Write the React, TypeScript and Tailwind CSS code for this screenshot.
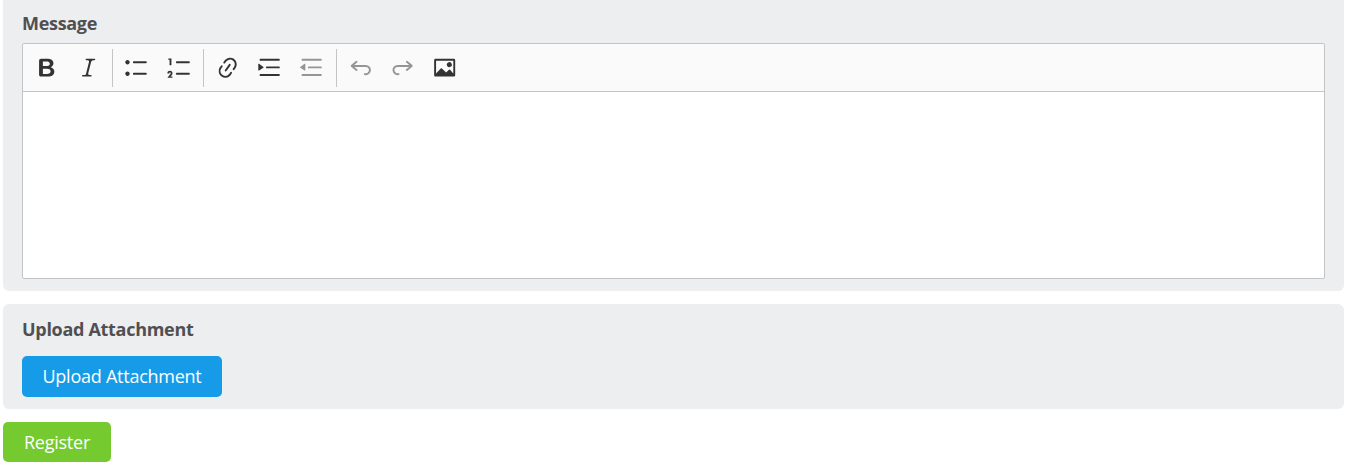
type Tool = {
  label: string;
  path: string;
  disabled?: boolean;
};

const LINES =
  'M2 3.75c0 .414.336.75.75.75h14.5a.75.75 0 1 0 0-1.5H2.75a.75.75 0 0 0-.75.75zm5 6c0 .414.336.75.75.75h9.5a.75.75 0 1 0 0-1.5h-9.5a.75.75 0 0 0-.75.75zM2.75 16.5h14.5a.75.75 0 1 0 0-1.5H2.75a.75.75 0 1 0 0 1.5z';

const toolGroups: Tool[][] = [
  [
    {
      label: 'Bold',
      path: 'M10.187 17H5.773c-.637 0-1.092-.138-1.364-.415-.273-.277-.409-.718-.409-1.323V4.738c0-.617.14-1.062.419-1.332.279-.27.73-.406 1.354-.406h4.68c.69 0 1.288.041 1.793.124.506.083.96.242 1.36.478.341.197.644.447.906.75a3.262 3.262 0 0 1 .808 2.162c0 1.401-.722 2.426-2.167 3.075C15.05 10.175 16 11.315 16 13.01a3.756 3.756 0 0 1-2.296 3.504 6.1 6.1 0 0 1-1.517.377c-.571.073-1.238.11-2 .11zm-.217-6.217H7v4.087h3.069c1.977 0 2.965-.69 2.965-2.072 0-.707-.256-1.22-.768-1.537-.512-.319-1.277-.478-2.296-.478zM7 5.13v3.619h2.606c.729 0 1.292-.067 1.69-.2a1.6 1.6 0 0 0 .91-.765c.165-.267.247-.566.247-.897 0-.707-.26-1.176-.778-1.409-.519-.232-1.31-.348-2.375-.348H7z',
    },
    {
      label: 'Italic',
      path: 'M9.586 14.633l.021.004c-.036.335.095.655.393.962.082.083.173.15.274.201h1.474a.6.6 0 1 1 0 1.2H5.304a.6.6 0 0 1 0-1.2h1.15c.474-.07.809-.182 1.005-.334.157-.122.291-.32.404-.597l2.416-9.55a1.053 1.053 0 0 0-.281-.823 1.12 1.12 0 0 0-.442-.296H8.15a.6.6 0 0 1 0-1.2h6.443a.6.6 0 1 1 0 1.2h-1.195c-.376.056-.65.155-.823.296-.215.175-.423.439-.623.79l-2.366 9.347z',
    },
  ],
  [
    {
      label: 'Bulleted List',
      path: 'M7 5.75c0 .414.336.75.75.75h9.5a.75.75 0 1 0 0-1.5h-9.5a.75.75 0 0 0-.75.75zm-6 0C1 4.784 1.777 4 2.75 4c.966 0 1.75.777 1.75 1.75 0 .966-.777 1.75-1.75 1.75C1.784 7.5 1 6.723 1 5.75zm6 9c0 .414.336.75.75.75h9.5a.75.75 0 1 0 0-1.5h-9.5a.75.75 0 0 0-.75.75zm-6 0c0-.966.777-1.75 1.75-1.75.966 0 1.75.777 1.75 1.75 0 .966-.777 1.75-1.75 1.75-.966 0-1.75-.777-1.75-1.75z',
    },
    {
      label: 'Numbered List',
      path: 'M7 5.75c0 .414.336.75.75.75h9.5a.75.75 0 1 0 0-1.5h-9.5a.75.75 0 0 0-.75.75zM3.5 3v5H2V3.7H1v-1h2.5V3zM.343 17.857l2.59-3.257H2.92a.6.6 0 1 0-1.04 0H.302a2 2 0 1 1 3.995 0h-.001c-.048.405-.16.734-.333.988-.175.254-.59.692-1.244 1.312H4.3v1h-4l.043-.043zM7 14.75a.75.75 0 0 1 .75-.75h9.5a.75.75 0 1 1 0 1.5h-9.5a.75.75 0 0 1-.75-.75z',
    },
  ],
  [
    {
      label: 'Link',
      path: 'm11.077 15 .991-1.416a.75.75 0 1 1 1.229.86l-1.148 1.64a.748.748 0 0 1-.217.206 5.251 5.251 0 0 1-8.503-5.955.741.741 0 0 1 .12-.274l1.147-1.639a.75.75 0 1 1 1.228.86L4.933 10.7l.006.003a3.75 3.75 0 0 0 6.132 4.294l.006.004zm5.494-5.335a.748.748 0 0 1-.12.274l-1.147 1.639a.75.75 0 1 1-1.228-.86l.86-1.23a3.75 3.75 0 0 0-6.144-4.301l-.86 1.229a.75.75 0 0 1-1.229-.86l1.148-1.64a.748.748 0 0 1 .217-.206 5.251 5.251 0 0 1 8.503 5.955zm-4.563-2.532a.75.75 0 0 1 .184 1.045l-3.155 4.505a.75.75 0 1 1-1.229-.86l3.155-4.506a.75.75 0 0 1 1.045-.184z',
    },
    {
      label: 'Increase indent',
      path: LINES + 'M1.632 6.95 5.02 9.358a.4.4 0 0 1-.013.661l-3.39 2.207A.4.4 0 0 1 1 11.892V7.275a.4.4 0 0 1 .632-.326z',
    },
    {
      label: 'Decrease indent',
      path: LINES + 'M4.368 6.95.98 9.358a.4.4 0 0 0 .013.661l3.39 2.207A.4.4 0 0 0 5 11.892V7.275a.4.4 0 0 0-.632-.326z',
      disabled: true,
    },
  ],
  [
    {
      label: 'Undo',
      path: 'm5.042 9.367 2.189 1.837a.75.75 0 0 1-.965 1.149l-3.788-3.18a.747.747 0 0 1-.21-.284.75.75 0 0 1 .17-.945L6.23 4.762a.75.75 0 1 1 .964 1.15L4.863 7.866h8.917A.75.75 0 0 1 14 7.9a4 4 0 1 1-1.477 7.718l.344-1.489a2.5 2.5 0 1 0 1.094-4.73l.008-.032H5.042z',
      disabled: true,
    },
    {
      label: 'Redo',
      path: 'm14.958 9.367-2.189 1.837a.75.75 0 0 0 .965 1.149l3.788-3.18a.747.747 0 0 0 .21-.284.75.75 0 0 0-.17-.945L13.77 4.762a.75.75 0 1 0-.964 1.15l2.331 1.955H6.22A.75.75 0 0 0 6 7.9a4 4 0 1 0 1.477 7.718l-.344-1.489A2.5 2.5 0 1 1 6.039 9.4l-.008-.032h8.927z',
      disabled: true,
    },
    {
      label: 'Insert image',
      path: 'M6.91 10.54c.26-.23.64-.21.88.03l3.36 3.14 2.23-2.06a.64.64 0 0 1 .87 0l2.52 2.97V4.5H3.2v10.12l3.71-4.08zm10.27-7.51c.6 0 1.09.47 1.09 1.05v11.84c0 .59-.49 1.06-1.09 1.06H2.79c-.6 0-1.09-.47-1.09-1.06V4.08c0-.58.49-1.05 1.1-1.05h14.38zm-5.22 5.56a1.96 1.96 0 1 1 3.4-1.96 1.96 1.96 0 0 1-3.4 1.96z',
    },
  ],
];

function ToolButton({ tool }: { tool: Tool }) {
  return (
    <button
      type="button"
      aria-label={tool.label}
      disabled={tool.disabled}
      className="flex h-10 w-[42.32px] items-center justify-center text-[#333] disabled:opacity-50"
    >
      <svg viewBox="0 0 20 20" className="size-[25.4px] fill-current">
        <path d={tool.path} />
      </svg>
    </button>
  );
}

function Editor() {
  return (
    <div className="rounded-[2px] border border-[#c4c4c4] bg-white">
      <div className="flex h-12 items-center rounded-t-[2px] border-b border-[#c4c4c4] bg-[#fafafa] pl-[2.45px]">
        {toolGroups.map((group, i) => (
          <div key={i} className="flex items-center">
            {i > 0 && <span className="mr-[2.6px] ml-[2.25px] h-[38px] w-px bg-[#c4c4c4]" />}
            {group.map((tool) => (
              <ToolButton key={tool.label} tool={tool} />
            ))}
          </div>
        ))}
      </div>
      <div className="h-[186px]" />
    </div>
  );
}

export default function App() {
  return (
    <div className="h-[466px] overflow-hidden bg-white pl-[3px] pr-1.5 font-['Open_Sans',sans-serif] text-lg tracking-[-0.25px] text-[#505052]">
      <section className="h-[291px] rounded-b-[6px] bg-[#edeef0] px-[19px] pt-2.5">
        <h2 className="mb-1.5 text-lg leading-[27px] font-bold tracking-[-0.3px]">Message</h2>
        <Editor />
      </section>

      <section className="mt-[13px] h-[105px] rounded-[6px] bg-[#edeef0] px-[19px] pt-3">
        <h2 className="mb-[13px] text-lg leading-[27px] font-bold tracking-[-0.3px]">Upload Attachment</h2>
        <button type="button" className="h-[41px] w-[200px] rounded-[5px] bg-[#169be8] pb-0.5 text-white">
          Upload Attachment
        </button>
      </section>

      <button type="button" className="mt-[13px] h-10 w-[108px] rounded-[5px] bg-[#75ca30] text-white">
        Register
      </button>
    </div>
  );
}
